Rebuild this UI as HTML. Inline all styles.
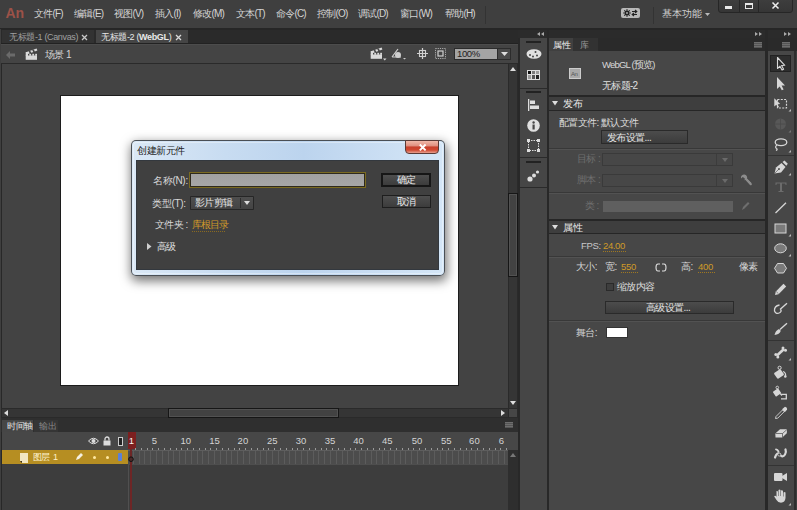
<!DOCTYPE html>
<html><head><meta charset="utf-8">
<style>
*{box-sizing:border-box;margin:0;padding:0}
html,body{width:797px;height:510px;overflow:hidden;background:#282828}
body{position:relative;font-family:"Liberation Sans",sans-serif;font-size:10px;color:#d0d0d0}
.a{position:absolute}
.t{position:absolute;white-space:nowrap;line-height:12px;font-size:10px;letter-spacing:-0.6px}
.m{letter-spacing:-0.8px !important;color:#d4d4d4}
svg{position:absolute;overflow:visible}
</style></head><body>

<!-- ================= MENU BAR ================= -->
<div class="a" style="left:0;top:0;width:797px;height:28px;background:#3f3f3f"></div>
<div class="a" style="left:0;top:28px;width:797px;height:2px;background:#262626"></div>
<div class="t" style="left:5.5px;top:6px;font-size:14px;line-height:15px;color:#9c5248;font-weight:bold;letter-spacing:0px">An</div>
<div class="t m" style="left:34px;top:8px">文件(F)</div>
<div class="t m" style="left:74px;top:8px">编辑(E)</div>
<div class="t m" style="left:114px;top:8px">视图(V)</div>
<div class="t m" style="left:155px;top:8px">插入(I)</div>
<div class="t m" style="left:193px;top:8px">修改(M)</div>
<div class="t m" style="left:236px;top:8px">文本(T)</div>
<div class="t m" style="left:276px;top:8px">命令(C)</div>
<div class="t m" style="left:317px;top:8px">控制(O)</div>
<div class="t m" style="left:358px;top:8px">调试(D)</div>
<div class="t m" style="left:400px;top:8px">窗口(W)</div>
<div class="t m" style="left:445px;top:8px">帮助(H)</div>
<div class="a" style="left:485px;top:6px;width:1px;height:18px;background:#333"></div>
<!-- sync button -->
<div class="a" style="left:621px;top:8px;width:19px;height:10px;background:#b8b8b8;border-radius:2px"></div>
<svg style="left:621px;top:8px" width="19" height="10"><g fill="#222"><circle cx="6" cy="5" r="2.3"/><path d="M6 1.2V8.8M2.2 5H9.8M3.3 2.3L8.7 7.7M8.7 2.3L3.3 7.7" stroke="#222" stroke-width="1.2"/></g><circle cx="6" cy="5" r="0.9" fill="#b8b8b8"/><path d="M11 3.5H15.5M14 2L15.8 3.5L14 5M16 6.5H11.5M13 5L11.2 6.5L13 8" stroke="#222" stroke-width="1.1" fill="none"/></svg>
<div class="a" style="left:653px;top:7px;width:1px;height:17px;background:#333"></div>
<div class="t" style="left:662px;top:8px;color:#d0d0d0;font-size:9.5px;letter-spacing:-0.1px">基本功能</div>
<svg style="left:705px;top:13px" width="5" height="3"><path d="M0 0H5L2.5 3Z" fill="#bbb"/></svg>
<!-- window buttons -->
<div class="a" style="left:718px;top:-2px;width:75px;height:15px;background:linear-gradient(#3e3e3e,#363636);border:1px solid #262626;border-radius:0 0 3px 3px"></div>
<div class="a" style="left:739px;top:0;width:1px;height:13px;background:#262626"></div>
<div class="a" style="left:758px;top:0;width:1px;height:13px;background:#262626"></div>
<div class="a" style="left:725px;top:6px;width:7px;height:3px;background:#e8e8e8"></div>
<div class="a" style="left:745px;top:3px;width:7.5px;height:6px;border:1.5px solid #e8e8e8;border-top-width:2px"></div>
<svg style="left:772px;top:2px" width="7" height="7"><path d="M0.5 0.5L6.5 6.5M6.5 0.5L0.5 6.5" stroke="#eee" stroke-width="1.5"/></svg>

<!-- ================= DOCUMENT AREA ================= -->
<!-- tab row -->
<div class="a" style="left:0;top:30px;width:518px;height:14px;background:#2a2a2a"></div>
<div class="a" style="left:2px;top:30px;width:92px;height:13px;background:#323232"></div>
<div class="t" style="left:9px;top:31px;color:#a0a0a0;font-size:9px;letter-spacing:-0.35px">无标题-1 (Canvas)</div>
<svg style="left:82px;top:35px" width="5" height="5"><path d="M0 0L5 5M5 0L0 5" stroke="#c8c8c8" stroke-width="1.3"/></svg>
<div class="a" style="left:96px;top:30px;width:92px;height:14px;background:#454545"></div>
<div class="t" style="left:101px;top:31px;color:#e8e8e8;font-size:9px;letter-spacing:-0.35px">无标题-2 (<b>WebGL</b>)</div>
<svg style="left:176px;top:35px" width="5" height="5"><path d="M0 0L5 5M5 0L0 5" stroke="#d8d8d8" stroke-width="1.3"/></svg>

<!-- scene bar -->
<div class="a" style="left:0;top:43px;width:518px;height:1px;background:#222"></div><div class="a" style="left:0;top:44px;width:518px;height:19px;background:#444"></div><div class="a" style="left:0;top:44px;width:518px;height:1px;background:#4c4c4c"></div>
<svg style="left:6px;top:51px" width="10" height="8"><path d="M0 4L4 0V2.5H9V5.5H4V8Z" fill="#6a6a6a"/></svg>
<!-- clapper -->
<svg style="left:25px;top:48px" width="13" height="13"><g fill="#dadada"><rect x="0.7" y="7.5" width="11.3" height="4.3"/><rect x="0.7" y="4" width="2.3" height="4"/><rect x="4.3" y="5.8" width="1.8" height="2"/><rect x="7.3" y="5.8" width="1.8" height="2"/><rect x="10.2" y="5.8" width="1.8" height="2"/><path d="M1 4.2L11.6 0.4L12.4 2.6L1.8 6.4Z"/><path d="M3.6 3.3L5.2 2.7L6.4 5L4.8 5.6ZM7.2 2L8.8 1.4L10 3.7L8.4 4.3Z" fill="#454545"/></g></svg>
<div class="t" style="left:45px;top:49px;color:#d4d4d4">场景 1</div>
<!-- right icons -->
<svg style="left:370px;top:47px" width="17" height="14"><g fill="#dadada"><rect x="0.7" y="7.5" width="11.3" height="4.3"/><rect x="0.7" y="4" width="2.3" height="4"/><rect x="4.3" y="5.8" width="1.8" height="2"/><rect x="7.3" y="5.8" width="1.8" height="2"/><rect x="10.2" y="5.8" width="1.8" height="2"/><path d="M1 4.2L11.6 0.4L12.4 2.6L1.8 6.4Z"/><path d="M3.6 3.3L5.2 2.7L6.4 5L4.8 5.6ZM7.2 2L8.8 1.4L10 3.7L8.4 4.3Z" fill="#454545"/><path d="M13 11.5H16.5L14.75 13.5Z"/></g></svg>
<svg style="left:391px;top:48px" width="16" height="12"><path d="M1 9L7 1M1 9H10" stroke="#cfcfcf" stroke-width="1.2" fill="none"/><circle cx="7" cy="7" r="3" fill="#cfcfcf"/><path d="M12 10H15L13.5 11.5Z" fill="#ccc"/></svg>
<svg style="left:417px;top:48px" width="11" height="11"><path d="M5.5 0V11M0 5.5H11" stroke="#d0d0d0" stroke-width="1.2"/><rect x="2.5" y="2.5" width="6" height="6" fill="none" stroke="#d0d0d0" stroke-width="1.1"/></svg>
<svg style="left:435px;top:48px" width="11" height="11"><rect x="0.5" y="0.5" width="10" height="10" fill="none" stroke="#aaa" stroke-width="1" stroke-dasharray="1.2 1"/><rect x="3" y="3" width="5" height="5" fill="none" stroke="#d0d0d0" stroke-width="1.2"/></svg>
<!-- zoom box -->
<div class="a" style="left:454px;top:48px;width:57px;height:12px;background:#2c2c2c"></div>
<div class="a" style="left:455px;top:49px;width:42px;height:10px;background:#a4a4a4"></div>
<div class="t" style="left:457px;top:48px;color:#222;font-size:9.5px;line-height:12px;letter-spacing:-0.4px">100%</div>
<div class="a" style="left:498px;top:49px;width:12px;height:10px;background:#4a4a4a"></div>
<svg style="left:501px;top:52px" width="7" height="4"><path d="M0 0H7L3.5 4Z" fill="#ddd"/></svg>

<!-- stage area -->
<div class="a" style="left:0;top:63px;width:518px;height:1px;background:#2a2a2a"></div>
<div class="a" style="left:2px;top:64px;width:506px;height:344px;background:#434343"></div>
<div class="a" style="left:60px;top:95px;width:399px;height:291px;background:#1c1c1c"></div>
<div class="a" style="left:61px;top:96px;width:397px;height:289px;background:#ffffff"></div>
<!-- v scrollbar -->
<div class="a" style="left:508px;top:64px;width:10px;height:344px;background:#2a2a2a"></div>
<div class="a" style="left:509px;top:64px;width:8px;height:344px;background:#353535"></div>
<svg style="left:510px;top:67px" width="6" height="4"><path d="M0 4H6L3 0Z" fill="#ddd"/></svg>
<svg style="left:510px;top:401px" width="6" height="4"><path d="M0 0H6L3 4Z" fill="#ddd"/></svg>
<div class="a" style="left:508px;top:193px;width:10px;height:84px;background:#161616"></div>
<div class="a" style="left:509px;top:194px;width:8px;height:82px;background:#424242;border:1px solid #525252"></div>
<!-- h scrollbar -->
<div class="a" style="left:0;top:408px;width:518px;height:10px;background:#2a2a2a"></div>
<div class="a" style="left:2px;top:409px;width:506px;height:8px;background:#353535"></div>
<svg style="left:4px;top:410px" width="4" height="6"><path d="M4 0V6L0 3Z" fill="#ddd"/></svg>
<svg style="left:501px;top:410px" width="4" height="6"><path d="M0 0V6L4 3Z" fill="#ddd"/></svg>
<div class="a" style="left:168px;top:408px;width:171px;height:10px;background:#161616"></div>
<div class="a" style="left:169px;top:409px;width:169px;height:8px;background:#424242;border:1px solid #525252"></div>
<div class="a" style="left:508px;top:408px;width:10px;height:10px;background:#464646;border:1px solid #2a2a2a"></div>

<!-- ================= TIMELINE ================= -->
<div class="a" style="left:0;top:418px;width:518px;height:14px;background:#2f2f2f"></div>
<div class="a" style="left:2px;top:420px;width:31px;height:12px;background:#464646"></div>
<div class="t" style="left:7px;top:420px;color:#e4e4e4;font-size:9px;letter-spacing:-0.3px">时间轴</div>
<div class="a" style="left:34px;top:420px;width:24px;height:12px;background:#353535"></div>
<div class="t" style="left:39px;top:420px;color:#8a8a8a;font-size:9px;letter-spacing:-0.3px">输出</div>
<div class="a" style="left:505px;top:422px;width:8px;height:6px;background:repeating-linear-gradient(#6e6e6e 0,#6e6e6e 1.3px,#555 1.3px,#555 2px)"></div>
<!-- header -->
<div class="a" style="left:2px;top:432px;width:516px;height:18px;background:#474747"></div>
<svg style="left:88px;top:437px" width="11" height="8"><path d="M0.5 4Q5.5 -1.5 10.5 4Q5.5 9.5 0.5 4Z" fill="none" stroke="#ddd" stroke-width="1"/><circle cx="5.5" cy="4" r="2" fill="#ddd"/></svg>
<svg style="left:103px;top:436px" width="8" height="10"><path d="M2 4.5V3A2 2 0 0 1 6 3V4.5" fill="none" stroke="#ddd" stroke-width="1.3"/><rect x="0.5" y="4.5" width="7" height="5" fill="#ddd"/></svg>
<div class="a" style="left:118px;top:437px;width:5px;height:9px;border:1px solid #ccc;background:#222"></div>
<!-- playhead header -->
<div class="a" style="left:128px;top:432px;width:7.5px;height:17px;background:#7c2020"></div>
<div class="t" style="left:127px;top:435px;width:9px;text-align:center;color:#f4f4f4;font-size:9.5px;letter-spacing:0">1</div>
<div class="t" style="left:144.3px;top:435px;width:20px;text-align:center;color:#d4d4d4;font-size:9.5px;letter-spacing:0">5</div>
<div class="t" style="left:175.7px;top:435px;width:20px;text-align:center;color:#d4d4d4;font-size:9.5px;letter-spacing:0">10</div>
<div class="t" style="left:204.5px;top:435px;width:20px;text-align:center;color:#d4d4d4;font-size:9.5px;letter-spacing:0">15</div>
<div class="t" style="left:232.9px;top:435px;width:20px;text-align:center;color:#d4d4d4;font-size:9.5px;letter-spacing:0">20</div>
<div class="t" style="left:262.2px;top:435px;width:20px;text-align:center;color:#d4d4d4;font-size:9.5px;letter-spacing:0">25</div>
<div class="t" style="left:291.1px;top:435px;width:20px;text-align:center;color:#d4d4d4;font-size:9.5px;letter-spacing:0">30</div>
<div class="t" style="left:320.0px;top:435px;width:20px;text-align:center;color:#d4d4d4;font-size:9.5px;letter-spacing:0">35</div>
<div class="t" style="left:348.6px;top:435px;width:20px;text-align:center;color:#d4d4d4;font-size:9.5px;letter-spacing:0">40</div>
<div class="t" style="left:377.3px;top:435px;width:20px;text-align:center;color:#d4d4d4;font-size:9.5px;letter-spacing:0">45</div>
<div class="t" style="left:407.1px;top:435px;width:20px;text-align:center;color:#d4d4d4;font-size:9.5px;letter-spacing:0">50</div>
<div class="t" style="left:436.2px;top:435px;width:20px;text-align:center;color:#d4d4d4;font-size:9.5px;letter-spacing:0">55</div>
<div class="t" style="left:464.4px;top:435px;width:20px;text-align:center;color:#d4d4d4;font-size:9.5px;letter-spacing:0">60</div>
<div class="t" style="left:491.4px;top:435px;width:20px;text-align:center;color:#d4d4d4;font-size:9.5px;letter-spacing:0">6</div>
<!-- layer row -->
<div class="a" style="left:2px;top:450px;width:126px;height:14px;background:#b68e22"></div>
<svg style="left:19px;top:453px" width="10" height="10"><path d="M1 0H9V10H3V8H1Z" fill="#f2e6c0"/><path d="M1 8H3V10Z" fill="#3a3020"/></svg>
<div class="t" style="left:32.5px;top:451px;color:#fff4d0;font-size:9px;letter-spacing:-0.2px">图层</div><div class="t" style="left:53px;top:451px;color:#fff0c8;font-size:9px;letter-spacing:0">1</div>
<svg style="left:75px;top:452px" width="8" height="9"><path d="M1 8L2 5L6 1L8 3L4 7Z" fill="#f4f0e0"/></svg>
<div class="a" style="left:93px;top:456px;width:3px;height:3px;background:#ffe8a0;border-radius:50%"></div>
<div class="a" style="left:106px;top:456px;width:3px;height:3px;background:#ffe8a0;border-radius:50%"></div>
<div class="a" style="left:118px;top:453px;width:4px;height:8px;background:#5a80d8;border-radius:1px"></div>
<!-- frames -->
<div class="a" style="left:128px;top:450px;width:380px;height:14px;background:#4c4c4c"></div>
<div class="a" id="frames" style="left:128px;top:450px;width:380px;height:14px;background-image:repeating-linear-gradient(90deg,transparent 0,transparent 4.8px,#5c5c5c 4.8px,#5c5c5c 5.8px)"></div>
<div class="a" style="left:128px;top:450px;width:380px;height:1px;background:#5e5e5e"></div><div class="a" style="left:134.5px;top:448px;width:374px;height:1.5px;background-image:repeating-linear-gradient(90deg,#9a9a9a 0,#9a9a9a 1px,transparent 1px,transparent 5.8px)"></div>
<div class="a" style="left:508px;top:450px;width:10px;height:60px;background:#2e2e2e"></div>
<svg style="left:510px;top:453px" width="6" height="4"><path d="M0 4H6L3 0Z" fill="#777"/></svg>
<div class="a" style="left:2px;top:464px;width:506px;height:46px;background:#3d3d3d"></div>
<div class="a" style="left:128px;top:464px;width:1px;height:46px;background:#505050"></div><div class="a" style="left:128px;top:464px;width:380px;height:1px;background:#4e4e4e"></div><div class="a" style="left:130px;top:449px;width:2px;height:61px;background:#6e2626"></div>
<svg style="left:128px;top:456px" width="6" height="7"><circle cx="3" cy="3.2" r="2.3" fill="#4a2a2a" stroke="#111" stroke-width="1"/></svg>
<div class="a" style="left:0;top:29px;width:1px;height:481px;background:#3f3f3f"></div>

<!-- ================= ICON COLUMN ================= -->
<div class="a" style="left:520px;top:38px;width:27px;height:472px;background:#464646"></div>
<div class="a" style="left:518px;top:30px;width:279px;height:8px;background:#2b2b2b"></div>
<svg style="left:537px;top:32px" width="7" height="4"><path d="M3 0V4L0 2ZM7 0V4L4 2Z" fill="#aaa"/></svg>
<!-- grips & dividers -->
<div class="a" style="left:520px;top:88px;width:27px;height:1px;background:#2a2a2a"></div>
<div class="a" style="left:520px;top:157px;width:27px;height:1px;background:#2a2a2a"></div>
<div class="a" style="left:520px;top:187px;width:27px;height:1px;background:#2a2a2a"></div>
<div class="a" style="left:526px;top:41px;width:15px;height:2px;background:#222"></div>
<div class="a" style="left:526px;top:91px;width:15px;height:2px;background:#222"></div>
<div class="a" style="left:526px;top:161px;width:15px;height:2px;background:#222"></div>
<!-- palette -->
<svg style="left:526px;top:49px" width="16" height="10"><ellipse cx="8" cy="5" rx="7.5" ry="4.8" fill="#e0e0e0"/><circle cx="4" cy="6" r="1" fill="#464646"/><circle cx="7" cy="7.5" r="1" fill="#464646"/><circle cx="11" cy="6.5" r="1" fill="#464646"/><circle cx="9.5" cy="3" r="1" fill="#464646"/></svg>
<!-- swatches -->
<svg style="left:527px;top:70px" width="13" height="10"><rect x="0" y="0" width="13" height="10" fill="#ddd"/><rect x="1" y="1" width="3" height="3" fill="#111"/><rect x="5" y="1" width="3" height="3" fill="#777"/><rect x="9" y="1" width="3" height="3" fill="#999"/><rect x="1" y="5" width="3" height="4" fill="#999"/><rect x="5" y="5" width="3" height="4" fill="#555"/><rect x="9" y="5" width="3" height="4" fill="#222"/></svg>
<!-- align -->
<svg style="left:528px;top:99px" width="11" height="12"><rect x="0" y="0" width="1.3" height="12" fill="#ddd"/><rect x="2" y="1.5" width="5" height="3.5" fill="#ddd"/><rect x="2" y="6.5" width="9" height="3.5" fill="#ddd"/></svg>
<!-- info -->
<svg style="left:527px;top:119px" width="13" height="13"><circle cx="6.5" cy="6.5" r="6.3" fill="#e0e0e0"/><rect x="5.5" y="5.5" width="2.2" height="5" fill="#464646"/><circle cx="6.6" cy="3.5" r="1.2" fill="#464646"/></svg>
<!-- transform -->
<svg style="left:527px;top:139px" width="13" height="13"><rect x="1.5" y="1.5" width="10" height="10" fill="none" stroke="#ddd" stroke-width="1" stroke-dasharray="1.5 1"/><rect x="0" y="0" width="3" height="3" fill="#ddd"/><rect x="10" y="0" width="3" height="3" fill="#ddd"/><rect x="0" y="10" width="3" height="3" fill="#ddd"/><rect x="10" y="10" width="3" height="3" fill="#ddd"/></svg>
<!-- motion presets -->
<svg style="left:527px;top:169px" width="13" height="13"><circle cx="3" cy="10" r="2.6" fill="#ddd"/><circle cx="7" cy="6.5" r="2" fill="#ddd"/><circle cx="10.5" cy="3" r="1.6" fill="#ddd"/></svg>
<div class="a" style="left:547px;top:30px;width:2px;height:480px;background:#282828"></div>

<!-- ================= PROPERTIES PANEL ================= -->
<svg style="left:755px;top:32px" width="7" height="4"><path d="M0 0V4L3 2ZM4 0V4L7 2Z" fill="#aaa"/></svg>
<svg style="left:784px;top:32px" width="7" height="4"><path d="M0 0V4L3 2ZM4 0V4L7 2Z" fill="#aaa"/></svg>
<div class="a" style="left:549px;top:38px;width:216px;height:13px;background:#2a2a2a"></div>
<div class="a" style="left:549px;top:38px;width:24px;height:13px;background:#404040"></div>
<div class="t" style="left:553px;top:39px;color:#f0f0f0;font-size:9px;letter-spacing:-0.3px">属性</div>
<div class="a" style="left:573px;top:38px;width:25px;height:13px;background:#323232"></div>
<div class="t" style="left:580px;top:39px;color:#9a9a9a;font-size:9px">库</div>
<div class="a" style="left:754px;top:42px;width:8px;height:6px;background:repeating-linear-gradient(#6e6e6e 0,#6e6e6e 1.3px,#555 1.3px,#555 2px)"></div>
<div class="a" style="left:549px;top:51px;width:216px;height:459px;background:#474747"></div>
<!-- doc header -->
<div class="a" style="left:569px;top:68px;width:12px;height:11px;background:#a8a8a8;border:1px solid #ccc"></div>
<div class="t" style="left:571px;top:68px;font-size:6px;color:#555">An</div>
<div class="t" style="left:602px;top:59px;color:#d8d8d8;font-size:9.5px;letter-spacing:-0.8px">WebGL (预览)</div>
<div class="t" style="left:602px;top:80px;color:#e0e0e0;font-size:10px;letter-spacing:-0.7px">无标题-2</div>
<!-- 发布 section header -->
<div class="a" style="left:549px;top:95px;width:216px;height:2px;background:#262626"></div>
<div class="a" style="left:549px;top:97px;width:216px;height:13px;background:#3e3e3e"></div>
<div class="a" style="left:549px;top:110px;width:216px;height:1px;background:#262626"></div>
<svg style="left:552px;top:101px" width="6" height="5"><path d="M0 0H6L3 4.5Z" fill="#ddd"/></svg>
<div class="t" style="left:563px;top:97px;color:#e8e8e8;font-size:10px;line-height:13px;letter-spacing:-0.5px">发布</div>
<div class="t" style="left:559px;top:117px;color:#dcdcdc">配置文件: 默认文件</div>
<div class="a" style="left:601px;top:130px;width:87px;height:14px;background:#2a2a2a"></div>
<div class="a" style="left:602px;top:131px;width:85px;height:12px;background:linear-gradient(#4c4c4c,#3c3c3c)"></div>
<div class="t" style="left:607px;top:132px;color:#e4e4e4">发布设置...</div>
<div class="a" style="left:549px;top:148px;width:216px;height:1px;background:#383838"></div>
<div class="a" style="left:549px;top:149px;width:216px;height:1px;background:#525252"></div>
<!-- target/script -->
<div class="t" style="left:577px;top:153px;color:#6e6e6e">目标 :</div>
<div class="a" style="left:602px;top:153px;width:131px;height:13px;border:1px solid #3a3a3a;background:#474747"></div>
<div class="a" style="left:716px;top:154px;width:1px;height:11px;background:#3c3c3c"></div><svg style="left:722px;top:158px" width="6" height="4"><path d="M0 0H6L3 4Z" fill="#6a6a6a"/></svg>
<div class="t" style="left:577px;top:174px;color:#6e6e6e">脚本 :</div>
<div class="a" style="left:602px;top:174px;width:131px;height:13px;border:1px solid #3a3a3a;background:#474747"></div>
<div class="a" style="left:716px;top:175px;width:1px;height:11px;background:#3c3c3c"></div><svg style="left:722px;top:179px" width="6" height="4"><path d="M0 0H6L3 4Z" fill="#6a6a6a"/></svg>
<svg style="left:740px;top:174px" width="12" height="12"><path d="M4.5 0.5A3.3 3.3 0 0 0 1 4.5L2.8 3L4.8 4.6L4.6 6.3A3.3 3.3 0 0 0 6.3 5.3L10.5 10L11.5 9L7 4.8A3.3 3.3 0 0 0 4.5 0.5Z" fill="#8c8c8c"/><path d="M6.5 5.5L10.8 10.2" stroke="#8c8c8c" stroke-width="2.2" stroke-linecap="round"/></svg>
<div class="a" style="left:549px;top:192px;width:216px;height:1px;background:#383838"></div>
<div class="a" style="left:549px;top:193px;width:216px;height:1px;background:#525252"></div>
<div class="t" style="left:585px;top:200px;color:#6e6e6e">类 :</div>
<div class="a" style="left:603px;top:201px;width:130px;height:11px;background:#5f5f5f"></div>
<svg style="left:741px;top:201px" width="9" height="10"><path d="M1 9L2 6L7 1L8.5 2.5L3.5 7.5Z" fill="#6e6e6e"/></svg>
<!-- 属性 section header -->
<div class="a" style="left:549px;top:219px;width:216px;height:2px;background:#262626"></div>
<div class="a" style="left:549px;top:221px;width:216px;height:12px;background:#3e3e3e"></div>
<div class="a" style="left:549px;top:233px;width:216px;height:1px;background:#262626"></div>
<svg style="left:552px;top:225px" width="6" height="5"><path d="M0 0H6L3 4.5Z" fill="#ddd"/></svg>
<div class="t" style="left:563px;top:221px;color:#e8e8e8;font-size:10px;line-height:13px;letter-spacing:-0.5px">属性</div>
<div class="t" style="left:581px;top:240px;color:#c8c8c8;font-size:9.5px;letter-spacing:-0.3px">FPS:</div>
<div class="t" style="left:603px;top:240px;color:#d09a28;font-size:9.5px;letter-spacing:-0.4px">24.00</div>
<div class="a" style="left:603px;top:251px;width:23px;height:1px;background-image:repeating-linear-gradient(90deg,#a07820 0,#a07820 1px,transparent 1px,transparent 2px)"></div>
<div class="a" style="left:549px;top:256px;width:216px;height:1px;background:#383838"></div>
<div class="a" style="left:549px;top:257px;width:216px;height:1px;background:#525252"></div>
<div class="t" style="left:576px;top:261px;color:#d4d4d4">大小:</div>
<div class="t" style="left:605px;top:261px;color:#d4d4d4">宽:</div>
<div class="t" style="left:621px;top:261px;color:#d09a28;font-size:9.5px;letter-spacing:-0.3px">550</div>
<div class="a" style="left:621px;top:272px;width:17px;height:1px;background-image:repeating-linear-gradient(90deg,#a07820 0,#a07820 1px,transparent 1px,transparent 2px)"></div>
<svg style="left:656px;top:263px" width="10" height="9"><path d="M4 1H2A2 3.5 0 0 0 2 8H4M6 1H8A2 3.5 0 0 1 8 8H6" fill="none" stroke="#ddd" stroke-width="1.1"/></svg>
<div class="t" style="left:681px;top:261px;color:#d4d4d4">高:</div>
<div class="t" style="left:698px;top:261px;color:#d09a28;font-size:9.5px;letter-spacing:-0.3px">400</div>
<div class="a" style="left:698px;top:272px;width:17px;height:1px;background-image:repeating-linear-gradient(90deg,#a07820 0,#a07820 1px,transparent 1px,transparent 2px)"></div>
<div class="t" style="left:739px;top:261px;color:#d4d4d4">像素</div>
<div class="a" style="left:606px;top:283px;width:8px;height:8px;border:1px solid #2a2a2a;background:#3e3e3e"></div>
<div class="t" style="left:617px;top:281px;color:#dcdcdc">缩放内容</div>
<div class="a" style="left:605px;top:301px;width:129px;height:13px;background:#2a2a2a"></div>
<div class="a" style="left:606px;top:302px;width:127px;height:11px;background:linear-gradient(#4c4c4c,#3c3c3c)"></div>
<div class="t" style="left:646px;top:302px;color:#e4e4e4">高级设置...</div>
<div class="a" style="left:549px;top:320px;width:216px;height:1px;background:#383838"></div>
<div class="a" style="left:549px;top:321px;width:216px;height:1px;background:#525252"></div>
<div class="t" style="left:576px;top:327px;color:#d4d4d4">舞台:</div>
<div class="a" style="left:606px;top:327px;width:22px;height:11px;background:#ffffff;border:1px solid #333"></div>
<div class="a" style="left:765px;top:30px;width:3px;height:480px;background:#282828"></div>

<!-- ================= TOOLS ================= -->
<div class="a" style="left:768px;top:38px;width:29px;height:13px;background:#2a2a2a"></div>
<div class="a" style="left:782px;top:42px;width:8px;height:6px;background:repeating-linear-gradient(#6e6e6e 0,#6e6e6e 1.3px,#555 1.3px,#555 2px)"></div>
<div class="a" style="left:768px;top:51px;width:26px;height:459px;background:#474747"></div>
<div class="a" style="left:794px;top:51px;width:2px;height:459px;background:#2e2e2e"></div><div class="a" style="left:796px;top:51px;width:1px;height:459px;background:#3e3e3e"></div>
<div class="a" style="left:770px;top:55px;width:21px;height:17px;background:#2e2e2e;border:1px solid #222"></div>



<!-- tool icons overlay -->
<svg style="left:0;top:0" width="797" height="510">
<g fill="#d6d6d6" stroke="none">
<!-- separators -->
<rect x="768" y="155" width="26" height="1" fill="#333"/>
<rect x="768" y="340" width="26" height="1" fill="#333"/>
<rect x="768" y="465" width="26" height="1" fill="#333"/>
<!-- 1 selection (outline arrow) -->
<path d="M777.5 57.5V68.5L780 66.2L782 70L783.6 69.2L781.6 65.5L784.8 65.3Z" fill="none" stroke="#d8d8d8" stroke-width="1.1" stroke-linejoin="round"/>
<!-- 2 subselection -->
<path d="M777 77V89L779.7 86.5L781.8 90.3L783.6 89.4L781.6 85.6L785 85.4Z"/>
<!-- 3 free transform -->
<rect x="777.5" y="99.5" width="9" height="8.5" fill="none" stroke="#d6d6d6" stroke-width="1.2" stroke-dasharray="2 1.3"/>
<path d="M774.3 98.3V106.5L776.3 104.8L777.8 107.5L779 106.9L777.6 104.3L780.2 104.1Z"/>
<path d="M791 109V111.5H788.5Z" fill="#bbb"/>
<!-- 4 3d rotation (dim) -->
<circle cx="780.5" cy="124" r="5.5" fill="#585858"/>
<path d="M775 124H786M780.5 118.5V129.5" stroke="#4a4a4a" stroke-width="0.8"/>
<path d="M791 130V132.5H788.5Z" fill="#777"/>
<!-- 5 lasso -->
<ellipse cx="781" cy="142.3" rx="5.8" ry="3.4" fill="none" stroke="#d6d6d6" stroke-width="1.3"/>
<path d="M777 145Q774.5 147 776.5 148.5Q778 149.5 776 150.5" fill="none" stroke="#d6d6d6" stroke-width="1.2"/>
<path d="M791 150V152.5H788.5Z" fill="#bbb"/>
<!-- 6 pen -->
<path d="M774.5 173.5L776 167.5L781.5 163L785.5 167L781 172.5Z"/>
<path d="M782.5 162L784.5 160.5L787.8 163.8L786.3 165.8Z"/>
<circle cx="779" cy="169" r="0.9" fill="#474747"/>
<path d="M774.8 173.2L779 169" stroke="#474747" stroke-width="0.6"/>
<path d="M791 173V175.5H788.5Z" fill="#bbb"/>
<!-- 7 text (dim) -->
<path d="M775.5 182.5H786.5V185H785.6L785.2 183.6H782V191H783.5V192H778.5V191H780V183.6H776.8L776.4 185H775.5Z" fill="#6c6c6c"/>
<!-- 8 line -->
<path d="M775.5 213L786 202.8" stroke="#d6d6d6" stroke-width="1.3"/>
<!-- 9 rect -->
<rect x="775" y="224" width="11" height="9" fill="#7a7a7a" stroke="#d6d6d6" stroke-width="1"/>
<path d="M791 234V236.5H788.5Z" fill="#bbb"/>
<!-- 10 oval -->
<ellipse cx="780.5" cy="248.3" rx="5.8" ry="4.5" fill="#7a7a7a" stroke="#d6d6d6" stroke-width="1"/>
<path d="M791 254V256.5H788.5Z" fill="#bbb"/>
<!-- 11 polystar -->
<path d="M777.5 263.5H783.5L786.5 268.3L783.5 273H777.5L774.5 268.3Z" fill="#7a7a7a" stroke="#d6d6d6" stroke-width="1"/>
<!-- 12 pencil -->
<path d="M775 295L775.8 291.5L783.5 283.8L786.2 286.5L778.5 294.2Z"/>
<path d="M776.2 291.5L778.5 293.8" stroke="#474747" stroke-width="0.6"/>
<!-- 13 paint brush -->
<path d="M780 309.5L787 303.2" stroke="#d6d6d6" stroke-width="1.4"/>
<path d="M779.5 305Q774 306 774.5 311Q776 315 780 312.5Q782 311 780.5 309.5" fill="none" stroke="#d6d6d6" stroke-width="1.3"/>
<!-- 14 brush -->
<path d="M780 329.5L787 323.3" stroke="#d6d6d6" stroke-width="1.4"/>
<path d="M774.5 335Q775.5 330.5 779 329L780.8 330.8Q779.5 334.5 774.5 335Z"/>
<!-- 15 bone -->
<path d="M777 355.5L784 349" stroke="#d6d6d6" stroke-width="2.6"/>
<circle cx="775.8" cy="354.5" r="1.5"/><circle cx="777.8" cy="357" r="1.5"/>
<circle cx="783" cy="348" r="1.5"/><circle cx="785.5" cy="350.2" r="1.5"/>
<path d="M791 358V360.5H788.5Z" fill="#bbb"/>
<!-- 16 paint bucket -->
<rect x="-4" y="-3.5" width="8" height="7" rx="1" transform="translate(779 374) rotate(-35)"/>
<circle cx="779.6" cy="367.8" r="1.6" fill="none" stroke="#d6d6d6" stroke-width="1"/>
<path d="M783 371.5Q786 372.5 785.5 376" fill="none" stroke="#d6d6d6" stroke-width="1.3"/>
<circle cx="785.3" cy="376.5" r="1.3"/>
<!-- 17 ink bottle -->
<rect x="-3.2" y="-3" width="6.4" height="6" rx="0.8" transform="translate(777 392.5) rotate(-35)"/>
<circle cx="777.3" cy="387.5" r="1.3" fill="none" stroke="#d6d6d6" stroke-width="0.9"/>
<path d="M780 393.5L782 395.5" stroke="#d6d6d6" stroke-width="1.1"/>
<path d="M781 394.3H786.3V398.8H781" fill="none" stroke="#d6d6d6" stroke-width="1.3"/>
<!-- 18 eyedropper -->
<path d="M775.5 418.5L776 416.5L782.5 410L784.2 411.7L777.7 418.2Z" fill="none" stroke="#d6d6d6" stroke-width="0.9"/>
<path d="M782 409.3L785 406.8Q787.5 407.5 787 409.7L784.8 412.3Z"/>
<!-- 19 eraser -->
<path d="M775.3 433.5L780 429.2H787L786.8 433.3L782.3 437.5H775.5Z"/>
<path d="M775.5 433.5H782.5L787 429.5M782.5 433.5V437.5" fill="none" stroke="#474747" stroke-width="0.7"/>
<!-- 20 width tool -->
<path d="M775 457.5Q777 452 779.5 454Q782.5 458.5 785 454.5Q786.5 452 785.5 449.5" fill="none" stroke="#d6d6d6" stroke-width="2.2" stroke-linecap="round"/>
<path d="M776 449.3Q777.5 449.5 778.5 451.5" fill="none" stroke="#d6d6d6" stroke-width="1.8" stroke-linecap="round"/>
<circle cx="779.3" cy="454.6" r="1.5" fill="#474747" stroke="#d6d6d6" stroke-width="0.8"/>
<!-- 21 camera -->
<rect x="774" y="473" width="8.5" height="8" rx="1"/>
<path d="M782 476L787 473V481L782 478Z"/>
<!-- 22 hand -->
<path d="M776 491.5Q777 490.5 778 491.5V496H778.5V490Q779.5 489 780.5 490V496H781V490.5Q782 489.8 783 490.7V496.5H783.5V492.5Q784.5 491.5 785.5 492.5V498Q785 502.5 781 502.7Q778 502.7 776.5 500L774.2 496.5Q774.5 495.3 776 496L776.5 497V491.5Z"/>
<path d="M791 503V505.5H788.5Z" fill="#bbb"/>
</g>
</svg>

<!-- ================= DIALOG ================= -->
<div class="a" style="left:131px;top:140px;width:314px;height:136px;border-radius:5px;box-shadow:1px 4px 11px 1px rgba(0,0,0,0.55)"></div>
<div class="a" style="left:131px;top:140px;width:314px;height:136px;border-radius:5px;background:#4a4f55"></div>
<div class="a" style="left:132px;top:141px;width:312px;height:134px;border-radius:4px;background:linear-gradient(90deg,#dae8f6 0%,#c8dcf1 30%,#bcd4ee 55%,#cadef3 80%,#d4e6f7 100%)"></div>
<div class="a" style="left:133px;top:142px;width:310px;height:132px;border-radius:3px;border:1px solid rgba(255,255,255,0.35)"></div>
<div class="t" style="left:137px;top:145px;color:#1e1e1e;font-size:9.5px;letter-spacing:-0.4px">创建新元件</div>
<!-- close btn -->
<div class="a" style="left:405px;top:140px;width:34px;height:14px;border-radius:1px 1px 4px 4px;background:linear-gradient(#f0b8a8 0%,#e09080 40%,#c8402c 50%,#d04830 75%,#e8a090 100%);border:1px solid #5a3a36"></div>
<svg style="left:419px;top:144px" width="8" height="7"><path d="M0.8 0.5L6.6 6.3M6.6 0.5L0.8 6.3" stroke="#fff" stroke-width="1.9"/></svg>
<!-- content -->
<div class="a" style="left:136px;top:160px;width:303px;height:110px;background:#33383e"></div>
<div class="a" style="left:137px;top:161px;width:301px;height:108px;background:#404040"></div>
<div class="t" style="left:153px;top:175px;color:#d8d8d8;letter-spacing:-0.3px">名称(N):</div>
<div class="a" style="left:189px;top:172px;width:177px;height:16px;background:#7a6a20"></div>
<div class="a" style="left:190px;top:173px;width:175px;height:14px;background:#2e2a1e"></div>
<div class="a" style="left:191px;top:174px;width:173px;height:12px;background:linear-gradient(#a0a0a0,#a6a6a6)"></div>
<div class="a" style="left:381px;top:173px;width:50px;height:14px;background:#161616"></div>
<div class="a" style="left:383px;top:175px;width:46px;height:10px;background:linear-gradient(#4e4e4e,#3c3c3c)"></div>
<div class="t" style="left:397px;top:174px;color:#eaeaea">确定</div>
<div class="t" style="left:152px;top:198px;color:#d8d8d8;letter-spacing:-0.3px">类型(T):</div>
<div class="a" style="left:190px;top:196px;width:64px;height:14px;background:#262626;border-radius:1px"></div>
<div class="a" style="left:191px;top:197px;width:62px;height:12px;background:linear-gradient(#4e4e4e,#444)"></div>
<div class="a" style="left:240px;top:198px;width:1px;height:10px;background:#2e2e2e"></div>
<div class="t" style="left:195px;top:197px;color:#e8e8e8">影片剪辑</div>
<svg style="left:244px;top:201px" width="6" height="4"><path d="M0 0H6L3 4Z" fill="#ddd"/></svg>
<div class="a" style="left:382px;top:195px;width:49px;height:13px;background:#1e1e1e"></div>
<div class="a" style="left:383px;top:196px;width:47px;height:11px;background:linear-gradient(#4e4e4e,#3c3c3c)"></div>
<div class="t" style="left:397px;top:196px;color:#eaeaea">取消</div>
<div class="t" style="left:155px;top:219px;color:#d8d8d8">文件夹 :</div>
<div class="t" style="left:192px;top:219px;color:#d09a2a;letter-spacing:-1px">库根目录</div><div class="a" style="left:192px;top:231px;width:34px;height:1px;background-image:repeating-linear-gradient(90deg,#8a6a20 0,#8a6a20 1px,transparent 1px,transparent 2px)"></div>
<svg style="left:147px;top:243px" width="5" height="7"><path d="M0 0V7L4.5 3.5Z" fill="#cfcfcf"/></svg>
<div class="t" style="left:157px;top:241px;color:#e0e0e0">高级</div>

</body></html>
